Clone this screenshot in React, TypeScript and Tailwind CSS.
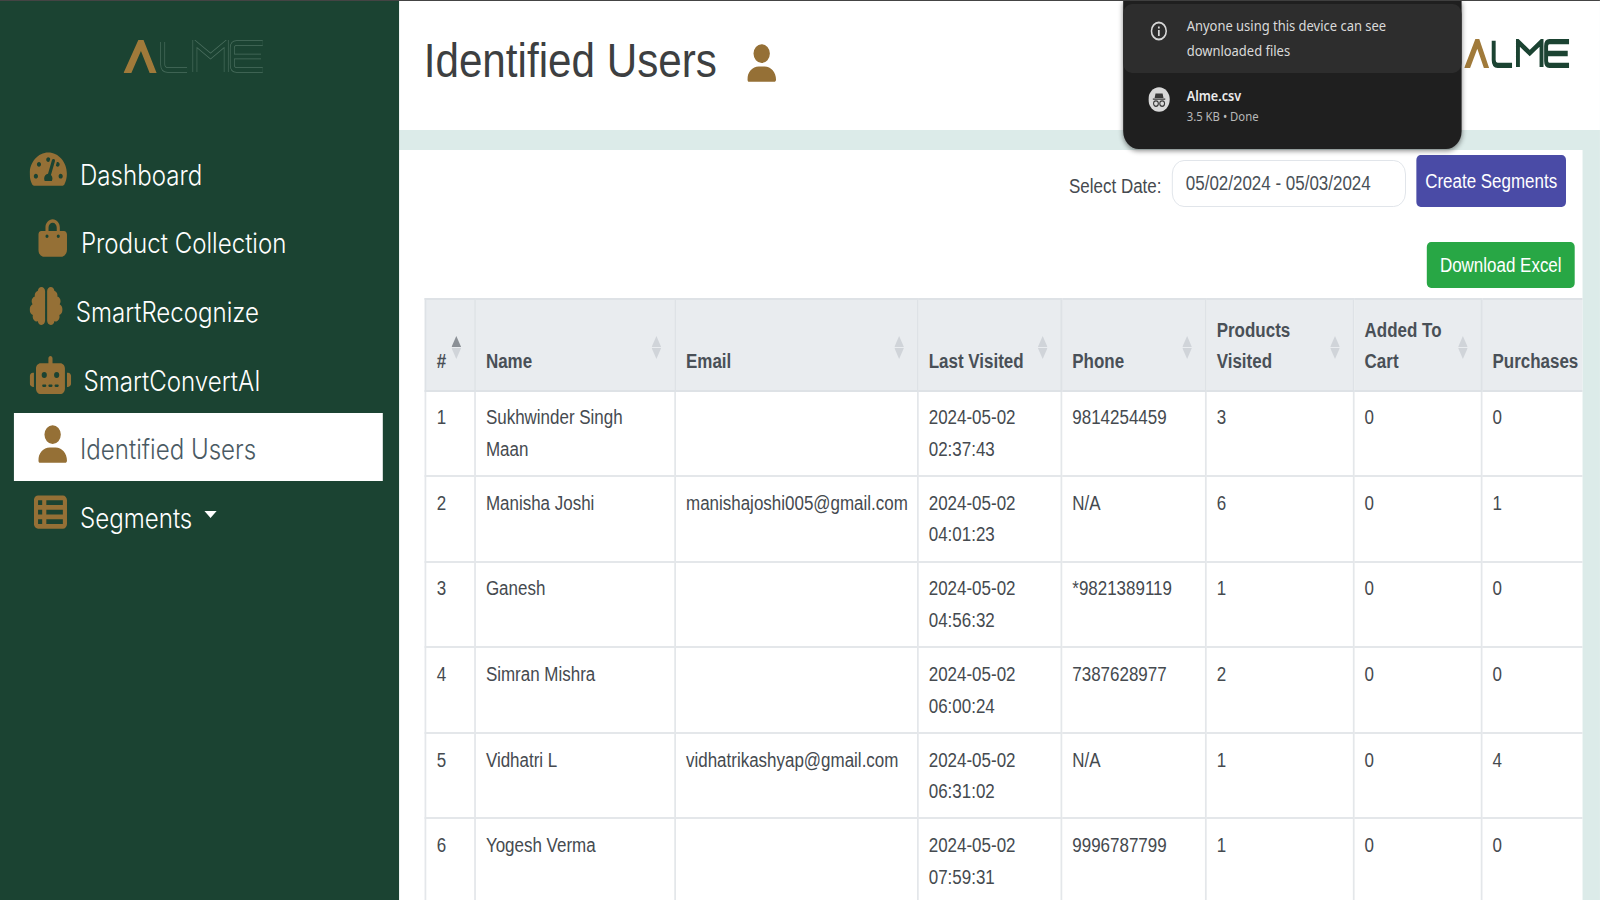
import type { ReactNode } from "react";
import { FaTachometerAlt } from "react-icons/fa";
import { FaBagShopping, FaBrain, FaRobot, FaTableList, FaUser } from "react-icons/fa6";

// the shot is squeezed horizontally, so the page is laid out wide and scaled on x
const nav: { label: string; icon: ReactNode; pad: string; gap: string; active?: boolean; caret?: boolean }[] = [
  { label: "Dashboard", icon: <FaTachometerAlt className="h-[38px] w-[43px]" />, pad: "pl-[18px]", gap: "gap-[15px]" },
  { label: "Product Collection", icon: <FaBagShopping className="h-[38px] w-[33px]" />, pad: "pl-[28px]", gap: "gap-[16px]" },
  { label: "SmartRecognize", icon: <FaBrain className="h-[38px] w-[38px]" />, pad: "pl-[18px]", gap: "gap-[15px]" },
  { label: "SmartConvertAI", icon: <FaRobot className="h-[38px] w-[48px]" />, pad: "pl-[18px]", gap: "gap-[14px]" },
  { label: "Identified Users", icon: <FaUser className="h-[38px] w-[33px]" />, pad: "pl-[28px]", gap: "gap-[15px]", active: true },
  { label: "Segments", icon: <FaTableList className="h-[38px] w-[38px]" />, pad: "pl-[23px]", gap: "gap-[15px]", caret: true },
];

const columns = [
  { label: "#", width: "w-[56.500px]", sorted: true },
  { label: "Name", width: "w-[230px]" },
  { label: "Email", width: "w-[279px]" },
  { label: "Last Visited", width: "w-[165px]" },
  { label: "Phone", width: "w-[166px]" },
  { label: "Products Visited", width: "w-[170px]" },
  { label: "Added To Cart", width: "w-[147px]" },
  { label: "Purchases", width: "w-[160px]", noSort: true },
];

const users = [
  ["1", "Sukhwinder Singh Maan", "", "2024-05-02 02:37:43", "9814254459", "3", "0", "0"],
  ["2", "Manisha Joshi", "manishajoshi005@gmail.com", "2024-05-02 04:01:23", "N/A", "6", "0", "1"],
  ["3", "Ganesh", "", "2024-05-02 04:56:32", "*9821389119", "1", "0", "0"],
  ["4", "Simran Mishra", "", "2024-05-02 06:00:24", "7387628977", "2", "0", "0"],
  ["5", "Vidhatri L", "vidhatrikashyap@gmail.com", "2024-05-02 06:31:02", "N/A", "1", "0", "4"],
  ["6", "Yogesh Verma", "", "2024-05-02 07:59:31", "9996787799", "1", "0", "0"],
];

function Logo({ solid, className }: { solid?: boolean; className: string }) {
  const letters = (
    <>
      <path d="M45 2V24Q45 30 51 30H73" />
      <path d="M82 32V3L100 16L118 3V32" />
      <path d="M160 3H130Q125 3 125 8V25Q125 30 130 30H160M125 16.500H158" />
    </>
  );
  return (
    <svg viewBox="0 0 162 33" preserveAspectRatio="none" className={className} fill="none">
      <path d="M0 33L17 0H23L38 33H30L20 11L9 33Z" fill="#a07a3a" />
      {solid ? (
        <g stroke="#1b4332" strokeWidth="6">
          {letters}
        </g>
      ) : (
        <>
          <g stroke="#4b6f5f" strokeWidth="5.500">
            {letters}
          </g>
          <g stroke="#1b4332" strokeWidth="4">
            {letters}
          </g>
        </>
      )}
    </svg>
  );
}

function SortArrows({ active }: { active?: boolean }) {
  return (
    <svg viewBox="0 0 11 23" className="absolute right-[15px] top-[36px] h-[23px] w-[11px]">
      <path d="M5.500 0L11 11H0Z" fill={active ? "#8b9096" : "#d0d4d9"} />
      <path d="M0 12H11L5.500 23Z" fill="#d0d4d9" />
    </svg>
  );
}

function DownloadBubble() {
  return (
    <div className="absolute left-[1291px] top-0 h-[148px] w-[389px] rounded-b-[18px] bg-[#1f1f1f] font-['Noto_Sans',sans-serif] shadow-[0_2px_6px_rgba(0,0,0,0.45)]">
      <div className="mt-[3px] flex h-[69px] items-start rounded-[10px] bg-[#2d2d2d] pl-[31px] pt-[9px]">
        <svg viewBox="0 0 20 20" className="mt-[8px] h-[20px] w-[20px]">
          <circle cx="10" cy="10" r="8.500" fill="none" stroke="#d6d6d6" strokeWidth="1.800" />
          <rect x="9" y="9" width="2" height="6" fill="#d6d6d6" />
          <rect x="9" y="5.500" width="2" height="2" fill="#d6d6d6" />
        </svg>
        <p className="ml-[22px] text-[14.900px] leading-[24.500px] text-[#dadada]">
          Anyone using this device can see
          <br />
          downloaded files
        </p>
      </div>
      <div className="flex items-start pl-[29px] pt-[11px]">
        <svg viewBox="0 0 24 24" className="mt-[3px] h-[25px] w-[24.500px]">
          <circle cx="12" cy="12" r="12" fill="#d8d8d8" />
          <path d="M5 11H19V12.300H5ZM8 6H16L17 10.500H7Z" fill="#3a3a3a" />
          <circle cx="8.500" cy="16" r="2.700" fill="none" stroke="#3a3a3a" strokeWidth="1.200" />
          <circle cx="15.500" cy="16" r="2.700" fill="none" stroke="#3a3a3a" strokeWidth="1.200" />
        </svg>
        <div className="ml-[19.500px]">
          <p className="text-[14.500px] font-semibold leading-[22px] text-[#ebebeb]">Alme.csv</p>
          <p className="text-[13px] leading-[20px] text-[#b9b9b9]">3.5 KB • Done</p>
        </div>
      </div>
    </div>
  );
}

export default function App() {
  return (
    <div className="h-[900px] w-[1600px] overflow-hidden bg-white">
      <div className="relative flex h-[900px] w-[1839px] origin-top-left scale-x-[0.87] border-t border-[#444444] font-['Liberation_Sans',Arial,sans-serif]">
        <aside className="w-[459px] shrink-0 bg-[#1b4332]">
          <div className="pl-[142px] pt-[39px]">
            <Logo className="h-[33px] w-[162px]" />
          </div>
          <nav className="mt-[65px]">
            {nav.map((n) => (
              <div
                key={n.label}
                className={`ml-4 mr-[19px] flex h-[68.700px] items-center ${n.pad} ${n.gap} ${
                  n.active ? "bg-white text-[#4a5a63]" : "text-white"
                } font-['Inter',sans-serif] text-[27.700px] font-light`}
              >
                <span className="mb-[7px] text-[#957036]">{n.icon}</span>
                <span className="mt-[6px]">{n.label}</span>
                {n.caret && (
                  <span className="ml-[-1px] mt-[-2px] h-0 w-0 border-x-[7px] border-t-[7px] border-x-transparent border-t-white" />
                )}
              </div>
            ))}
          </nav>
        </aside>

        <main className="flex min-w-0 flex-1 flex-col bg-[#dcebe9]">
          <header className="flex h-[129px] shrink-0 items-center bg-white pl-[28px]">
            <h1 className="mt-[-10px] text-[48.500px] font-normal text-[#3d3f41]">Identified Users</h1>
            <FaUser className="ml-[35px] mt-[-5px] h-[38px] w-[33px] text-[#957036]" />
            <Logo solid className="ml-auto mr-[34px] mt-[-24px] h-[29px] w-[122px]" />
          </header>

          <section className="mr-[20px] mt-[20px] min-h-0 flex-1 overflow-hidden bg-white text-[#454a4f]">
            <div className="flex items-start justify-end pr-[19px] pt-[5px]">
              <label className="mr-[12px] mt-[16px] text-[19.500px] leading-[30px]">Select Date:</label>
              <div className="mr-[12px] mt-[5px] flex h-[47px] w-[269px] items-center rounded-[14px] border border-[#dfe3e8] pl-[15px] text-[19.500px] text-[#495057]">
                05/02/2024 - 05/03/2024
              </div>
              <button className="h-[52px] w-[172px] rounded-[5px] bg-[#4a4ba6] pt-[2px] text-[19.500px] text-white">
                Create Segments
              </button>
            </div>
            <div className="mt-[34.500px] flex justify-end pr-[9px]">
              <button className="h-[46px] w-[170px] rounded-[5px] bg-[#28a745] pt-[2px] text-[19.500px] text-white">
                Download Excel
              </button>
            </div>

            <div className="mt-[10px] pl-[29px]">
              <table className="w-[1373.500px] table-fixed border-collapse text-left text-[19.500px] leading-[31.500px]">
                <thead>
                  <tr className="bg-[#e9ecef] text-[#495057]">
                    {columns.map((c) => (
                      <th
                        key={c.label}
                        className={`${c.width} relative border-2 border-[#dee2e6] pb-[12px] pl-[12px] pr-[13px] pt-[15px] align-bottom font-bold`}
                      >
                        {c.label}
                        {!c.noSort && <SortArrows active={c.sorted} />}
                      </th>
                    ))}
                  </tr>
                </thead>
                <tbody>
                  {users.map((u) => (
                    <tr key={u[0]}>
                      {u.map((v, i) => (
                        <td key={i} className="border-2 border-[#e4e7ea] pb-[9.800px] pl-[12px] pr-[13px] pt-[10.800px] align-top">
                          {v}
                        </td>
                      ))}
                    </tr>
                  ))}
                </tbody>
              </table>
            </div>
          </section>
        </main>

        <DownloadBubble />
      </div>
    </div>
  );
}
